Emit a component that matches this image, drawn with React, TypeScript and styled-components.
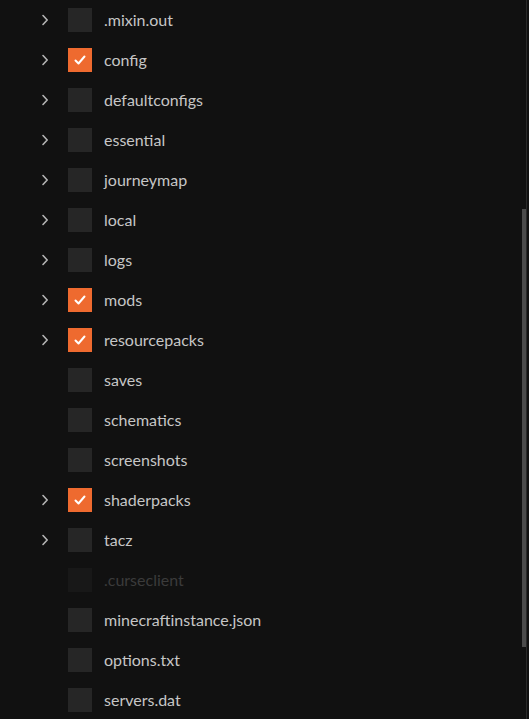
import React from "react";
import styled, { createGlobalStyle } from "styled-components";

const Global = createGlobalStyle`
  html, body { margin: 0; padding: 0; background: #111111; }
  body { font-family: Lato, "Noto Sans", sans-serif; }
`;

const Panel = styled.div`
  position: relative;
  width: 529px;
  height: 719px;
  background: #111111;
  overflow: hidden;
`;

const List = styled.ul`
  list-style: none;
  margin: 0;
  padding: 0;
  display: flex;
  flex-direction: column;
`;

const Row = styled.li<{ $disabled?: boolean }>`
  height: 40px;
  display: flex;
  align-items: center;
  padding-left: 38px;
  color: ${(p) => (p.$disabled ? "#3b3b3b" : "#c6c6c6")};
  font-size: 16px;
`;

const Chevron = styled.span`
  width: 14px;
  height: 14px;
  display: flex;
  align-items: center;
  justify-content: center;
  margin-right: 16px;
  color: #b5b5b5;
`;

const Box = styled.span<{ $checked?: boolean; $disabled?: boolean }>`
  width: 24px;
  height: 24px;
  flex: none;
  display: flex;
  align-items: center;
  justify-content: center;
  background: ${(p) => (p.$checked ? "#ee6a2f" : p.$disabled ? "#181818" : "#262626")};
  margin-right: 12px;
`;

const Label = styled.span`
  line-height: 20px;
`;

const Track = styled.div`
  position: absolute;
  top: 0;
  right: 2px;
  width: 1px;
  height: 719px;
  background: #2a2a2a;
`;

const Thumb = styled.div`
  position: absolute;
  top: 209px;
  right: 3px;
  width: 4px;
  height: 438px;
  background: #4b4b4b;
`;

type Item = { name: string; folder?: boolean; checked?: boolean; disabled?: boolean };

const items: Item[] = [
  { name: ".mixin.out", folder: true },
  { name: "config", folder: true, checked: true },
  { name: "defaultconfigs", folder: true },
  { name: "essential", folder: true },
  { name: "journeymap", folder: true },
  { name: "local", folder: true },
  { name: "logs", folder: true },
  { name: "mods", folder: true, checked: true },
  { name: "resourcepacks", folder: true, checked: true },
  { name: "saves" },
  { name: "schematics" },
  { name: "screenshots" },
  { name: "shaderpacks", folder: true, checked: true },
  { name: "tacz", folder: true },
  { name: ".curseclient", disabled: true },
  { name: "minecraftinstance.json" },
  { name: "options.txt" },
  { name: "servers.dat" },
];

const ChevronIcon = () => (
  <svg width="8" height="12" viewBox="0 0 8 12" fill="none">
    <path d="M2 1.5 L6.2 6 L2 10.5" stroke="currentColor" strokeWidth="1.6" strokeLinecap="round" strokeLinejoin="round" />
  </svg>
);

const CheckIcon = () => (
  <svg width="14" height="12" viewBox="0 0 14 12" fill="none">
    <path d="M2.5 6.5 L5.5 9.5 L11.5 2.5" stroke="#ffffff" strokeWidth="2" strokeLinecap="round" strokeLinejoin="round" />
  </svg>
);

export default function App() {
  return (
    <Panel>
      <Global />
      <List>
        {items.map((it) => (
          <Row key={it.name} $disabled={it.disabled}>
            <Chevron>{it.folder ? <ChevronIcon /> : null}</Chevron>
            <Box $checked={it.checked} $disabled={it.disabled}>
              {it.checked ? <CheckIcon /> : null}
            </Box>
            <Label>{it.name}</Label>
          </Row>
        ))}
      </List>
      <Track />
      <Thumb />
    </Panel>
  );
}
